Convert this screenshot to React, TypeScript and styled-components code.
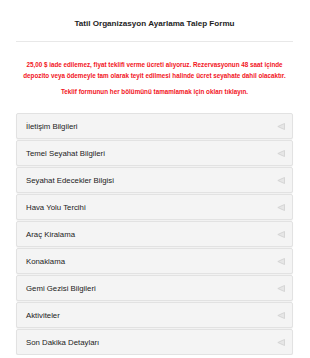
import React from "react";
import styled, { createGlobalStyle } from "styled-components";

const Global = createGlobalStyle`
  html, body { margin: 0; padding: 0; background: #fff; }
  body { font-family: "Liberation Sans", Arial, sans-serif; }
`;

const Page = styled.div`
  width: 310px;
  padding: 0 17px 0 16px;
  box-sizing: border-box;
`;

const Title = styled.h1`
  margin: 0;
  padding: 19px 0 13px;
  text-align: center;
  font-size: 8.1px;
  font-weight: bold;
  color: #1e1e1e;
  border-bottom: 1px solid #e8e8e8;
`;

const Notice = styled.div`
  padding: 17px 0 0;
  text-align: center;
  color: #f2141d;
  font-weight: bold;
  font-size: 6.3px;
  line-height: 11px;
`;

const NoticePara = styled.p<{ $gap?: number }>`
  margin: 0 0 ${(p) => p.$gap ?? 0}px;
`;

const List = styled.div`
  margin-top: 16px;
  display: flex;
  flex-direction: column;
  gap: 1px;
`;

const Item = styled.div`
  height: 24px;
  display: flex;
  align-items: center;
  justify-content: space-between;
  padding: 0 7px 0 9px;
  background: #f4f4f4;
  border: 1px solid #e2e2e2;
  border-radius: 2px;
  box-shadow: 0 1px 1px rgba(0, 0, 0, 0.06);
  font-size: 7.8px;
  color: #222;
`;

const Arrow = () => (
  <svg width="8" height="7" viewBox="0 0 8 7">
    <path d="M7.5 0.5 L0.8 3.5 L7.5 6.5 Z" fill="#e6e6e6" stroke="#cfcfcf" strokeWidth="0.8" />
  </svg>
);

const sections = [
  "İletişim Bilgileri",
  "Temel Seyahat Bilgileri",
  "Seyahat Edecekler Bilgisi",
  "Hava Yolu Tercihi",
  "Araç Kiralama",
  "Konaklama",
  "Gemi Gezisi Bilgileri",
  "Aktiviteler",
  "Son Dakika Detayları",
];

export default function App() {
  return (
    <Page>
      <Global />
      <Title>Tatil Organizasyon Ayarlama Talep Formu</Title>
      <Notice>
        <NoticePara $gap={5}>
          25,00 $ iade edilemez, fiyat teklifi verme ücreti alıyoruz. Rezervasyonun 48 saat içinde
          <br />
          depozito veya ödemeyle tam olarak teyit edilmesi halinde ücret seyahate dahil olacaktır.
        </NoticePara>
        <NoticePara>Teklif formunun her bölümünü tamamlamak için okları tıklayın.</NoticePara>
      </Notice>
      <List>
        {sections.map((s) => (
          <Item key={s}>
            <span>{s}</span>
            <Arrow />
          </Item>
        ))}
      </List>
    </Page>
  );
}
